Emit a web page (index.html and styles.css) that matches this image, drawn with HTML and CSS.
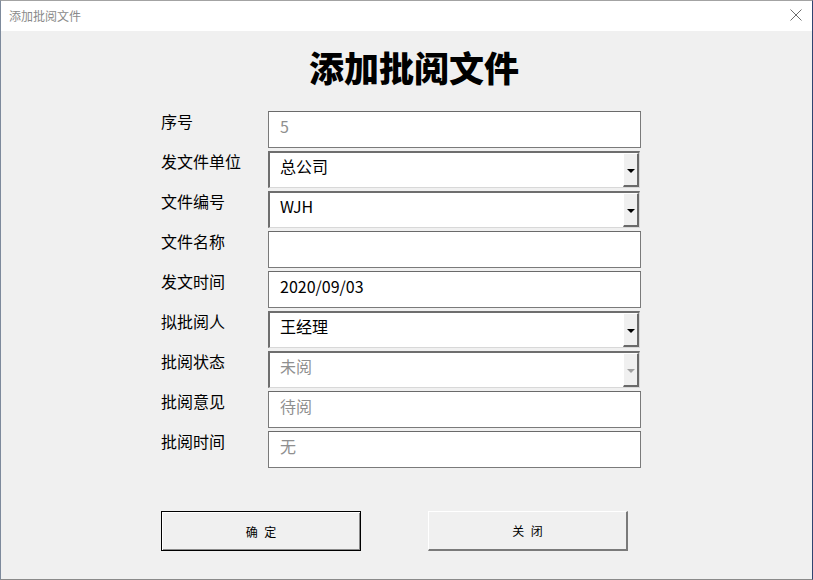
FILE: index.html
```html
<!DOCTYPE html>
<html lang="zh">
<head>
<meta charset="utf-8">
<link rel="stylesheet" href="styles.css">
</head>
<body>
<div class="window">
  <div class="titlebar">
    <span class="title">添加批阅文件</span>
    <svg class="close" width="12" height="12" viewBox="0 0 12 12"><path d="M0.5 0.5 L11.5 11.5 M11.5 0.5 L0.5 11.5" stroke="#6d6d6d" stroke-width="1"/></svg>
  </div>
  <div class="content">
    <h1 class="heading">添加批阅文件</h1>
    <div class="form">
      <div class="row"><label class="label">序号</label><div class="field text"><span class="value dim">5</span></div></div>
      <div class="row"><label class="label">发文件单位</label><div class="field combo"><span class="value">总公司</span><span class="btn"><span class="arrow"></span></span></div></div>
      <div class="row"><label class="label">文件编号</label><div class="field combo"><span class="value">WJH</span><span class="btn"><span class="arrow"></span></span></div></div>
      <div class="row"><label class="label">文件名称</label><div class="field text"><span class="value"></span></div></div>
      <div class="row"><label class="label">发文时间</label><div class="field text"><span class="value">2020/09/03</span></div></div>
      <div class="row"><label class="label">拟批阅人</label><div class="field combo"><span class="value">王经理</span><span class="btn"><span class="arrow"></span></span></div></div>
      <div class="row"><label class="label">批阅状态</label><div class="field combo disabled"><span class="value dim">未阅</span><span class="btn"><span class="arrow"></span></span></div></div>
      <div class="row"><label class="label">批阅意见</label><div class="field text"><span class="value dim">待阅</span></div></div>
      <div class="row"><label class="label">批阅时间</label><div class="field text"><span class="value dim">无</span></div></div>
    </div>
    <div class="buttons">
      <button class="button default">确 定</button>
      <button class="button">关 闭</button>
    </div>
  </div>
</div>
</body>
</html>
```
FILE: styles.css
```css
html, body {
  margin: 0;
  padding: 0;
  background: #f0f0f0;
}
.window {
  width: 813px;
  height: 580px;
  box-sizing: border-box;
  border-top: 1px solid #a3a3a3;
  border-left: 1px solid #7d8a9c;
  border-right: 1px solid #2f4470;
  border-bottom: 1px solid #8a8a8a;
  display: flex;
  flex-direction: column;
  font-family: "Noto Sans CJK SC", "Microsoft YaHei", sans-serif;
  background: #f0f0f0;
}
.titlebar {
  height: 30px;
  background: #ffffff;
  display: flex;
  align-items: center;
  justify-content: space-between;
  padding: 0 10px 0 8px;
  flex: none;
}
.title {
  font-size: 12px;
  color: #8a8a8a;
  position: relative;
  top: -1px;
}
.close {
  position: relative;
  top: -1px;
}
.content {
  flex: 1;
  display: flex;
  flex-direction: column;
  padding-left: 160px;
}
.heading {
  margin: 11px 0 0 148px;
  width: 210px;
  text-align: center;
  font-size: 35px;
  font-weight: 900;
  line-height: 50px;
  color: #000;
  letter-spacing: 0px;
}
.form {
  margin-top: 19px;
  display: flex;
  flex-direction: column;
  gap: 3px;
}
.row {
  display: flex;
  align-items: flex-start;
  height: 37px;
}
.label {
  width: 107px;
  font-size: 16px;
  line-height: 22px;
  margin-top: -1px;
  color: #000;
}
.field {
  box-sizing: border-box;
  width: 373px;
  height: 37px;
  background: #fff;
  display: flex;
  align-items: center;
  position: relative;
}
.text {
  border: 1px solid #7a7a7a;
  border-top-color: #6a6a6a;
}
.combo {
  width: 372px;
  border-top: 2px solid #6e6e6e;
  border-left: 2px solid #6e6e6e;
  border-right: 1px solid #d8d8d8;
  border-bottom: 1px solid #d8d8d8;
}
.value {
  font-size: 16px;
  padding-left: 11px;
  color: #000;
  line-height: 22px;
  position: relative;
  top: -4px;
}
.combo .value {
  padding-left: 10px;
}
.dim {
  color: #8f8f8f;
}
.btn {
  position: absolute;
  right: 0;
  top: 0;
  bottom: 0;
  width: 16px;
  box-sizing: border-box;
  background: #f0f0f0;
  border-left: 1px solid #ffffff;
  border-top: 1px solid #ffffff;
  border-right: 2px solid #6a6a6a;
  border-bottom: 2px solid #6a6a6a;
  display: flex;
  align-items: center;
  justify-content: center;
}
.arrow {
  width: 0;
  height: 0;
  border-left: 4px solid transparent;
  border-right: 4px solid transparent;
  border-top: 4px solid #000;
  margin-top: 2px;
}
.disabled .arrow {
  border-top-color: #a0a0a0;
}
.buttons {
  margin-top: 43px;
  display: flex;
  gap: 67px;
}
.button {
  width: 200px;
  height: 40px;
  box-sizing: border-box;
  background: #f0f0f0;
  font-family: "Noto Sans CJK SC", sans-serif;
  font-size: 12px;
  color: #000;
  letter-spacing: 2px;
  padding: 0 0 0 2px;
  border-top: 1px solid #ffffff;
  border-left: 1px solid #ffffff;
  border-right: 2px solid #7a7a7a;
  border-bottom: 2px solid #7a7a7a;
}
.button.default {
  border: 1px solid #000;
  box-shadow: inset 1px 1px 0 #ffffff, inset -1px -1px 0 #8a8a8a;
}
```
